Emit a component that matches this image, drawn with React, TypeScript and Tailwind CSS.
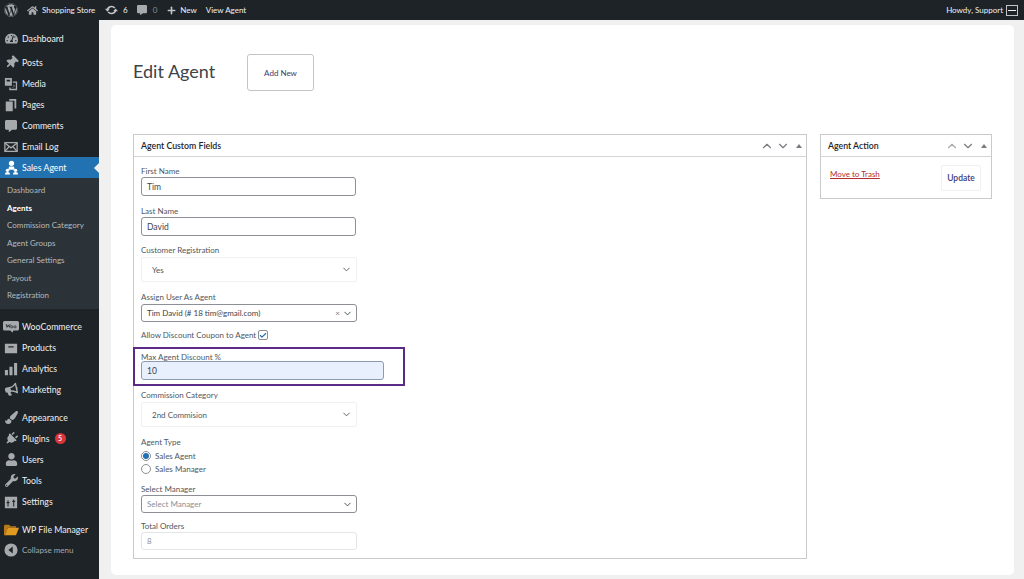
import type { ReactNode } from "react";
import { Check, ChevronDown, ChevronUp, Plus } from "lucide-react";
import {
  FaBullhorn,
  FaCommentAlt,
  FaHome,
  FaPaintBrush,
  FaPlug,
  FaThumbtack,
  FaTachometerAlt,
  FaUser,
  FaWordpress,
  FaWrench,
} from "react-icons/fa";

function UpdatesIcon() {
  return (
    <svg viewBox="0 0 16 12" className="h-[10px] w-[13px]" fill="none" stroke="currentColor" strokeWidth="2">
      <path d="M3 6a5 4.500 0 0 1 9-2.500M13 6a5 4.500 0 0 1-9 2.500" />
      <path d="M0 4.500h6L3 8zM16 7.500h-6L13 4z" fill="currentColor" stroke="none" />
    </svg>
  );
}

function MediaIcon() {
  return (
    <svg viewBox="0 0 16 16" className="h-[14px] w-[14px]" fill="currentColor">
      <path d="M1 1h8v9H1zM3 3v2h4V3zM10 5h5v10H6v-3h1.500v1.500H13.500V6.500H10zM10.500 8.500a1.500 1.500 0 1 1-1 2.600V12H11V8.500z" fillRule="evenodd" />
    </svg>
  );
}

function PagesIcon() {
  return (
    <svg viewBox="0 0 16 16" className="h-[14px] w-[14px]" fill="currentColor">
      <path d="M6 1h8v11h-2V3H6zM2 4h8v11H2z" />
    </svg>
  );
}

function MailIcon() {
  return (
    <svg viewBox="0 0 16 16" className="h-[14px] w-[14px]" fill="none" stroke="currentColor" strokeWidth="1.500">
      <rect x="1" y="3" width="14" height="10" />
      <path d="M1 3.500 8 9l7-5.500M1 13l5-5.500M15 13l-5-5.500" />
    </svg>
  );
}

function AgentIcon() {
  return (
    <svg viewBox="0 0 16 16" className="h-[15px] w-[15px]" fill="currentColor">
      <circle cx="8" cy="3.500" r="2.800" />
      <path d="M5.500 7h5l1 3.500h-7z" />
      <circle cx="3.700" cy="11" r="1.800" />
      <circle cx="12.300" cy="11" r="1.800" />
      <path d="M1 15.500c0-2 1-2.800 2.700-2.800s2.700.8 2.700 2.800zM9.600 15.500c0-2 1-2.800 2.700-2.800s2.700.8 2.700 2.800z" />
    </svg>
  );
}

function WooIcon() {
  return (
    <svg viewBox="0 0 20 16" className="h-[13px] w-[16px]" fill="currentColor">
      <path d="M2 1h16a2 2 0 0 1 2 2v8a2 2 0 0 1-2 2h-5l-1 2.500-3-2.500H2a2 2 0 0 1-2-2V3a2 2 0 0 1 2-2z" />
      <path d="M4 5l1 4 1.500-3L8 9l1-4M11 7a1.200 1.500 0 1 0 .01 0M15 7a1.200 1.500 0 1 0 .01 0" fill="none" stroke="#1d2327" strokeWidth="1" />
    </svg>
  );
}

function ProductsIcon() {
  return (
    <svg viewBox="0 0 16 16" className="h-[14px] w-[14px]" fill="currentColor">
      <path d="M1 3h14v11H1zM5 6v1.500h6V6z" fillRule="evenodd" />
    </svg>
  );
}

function AnalyticsIcon() {
  return (
    <svg viewBox="0 0 16 16" className="h-[14px] w-[14px]" fill="currentColor">
      <path d="M1 9h3.500v6H1zM6.200 5.500h3.500V15H6.200zM11.500 1H15v14h-3.500z" />
    </svg>
  );
}

function SettingsIcon() {
  return (
    <svg viewBox="0 0 16 16" className="h-[14px] w-[14px]" fill="currentColor">
      <path d="M1 2h14v13H1zM4 6v2H3v1.500h1V13h1.200V9.500h1V8h-1V6zM10.500 5v1.500h-1V8h1v5h1.200V8h1V6.500h-1V5z" fillRule="evenodd" />
    </svg>
  );
}

function FolderIcon() {
  return (
    <svg viewBox="0 0 20 16" className="h-[12px] w-[15px]">
      <path d="M0 2.500 1 1h6l1.500 2H16v2H5L2 15H0z" fill="#b8791a" />
      <path d="M5 5h15l-4 10H1.500z" fill="#e09a22" />
    </svg>
  );
}

function CollapseIcon() {
  return (
    <svg viewBox="0 0 16 16" className="h-[14px] w-[14px]">
      <circle cx="8" cy="8" r="7.500" fill="currentColor" />
      <path d="M10 4v8L5 8z" fill="#1d2327" />
    </svg>
  );
}

function MenuItem({ icon, label, badge, className = "" }: { icon: ReactNode; label: string; badge?: string; className?: string }) {
  return (
    <div className={`flex h-[21px] items-center text-[#f0f0f1] ${className}`}>
      <span className="flex w-[22px] shrink-0 justify-center text-[#a7aaad]">{icon}</span>
      <span className="text-[8.750px] whitespace-nowrap">{label}</span>
      {badge && (
        <span className="ml-[5px] flex h-[11px] w-[11px] items-center justify-center rounded-full bg-[#d63638] text-[7px] font-semibold text-white">
          {badge}
        </span>
      )}
    </div>
  );
}

function Sidebar() {
  const icon = "h-[13px] w-[13px]";
  return (
    <aside className="flex w-[99px] shrink-0 flex-col bg-[#1d2327] pt-[8px]">
      <MenuItem icon={<FaTachometerAlt className={icon} />} label="Dashboard" />
      <div className="mt-[3px] flex flex-col">
        <MenuItem icon={<FaThumbtack className={`${icon} rotate-45`} />} label="Posts" />
        <MenuItem icon={<MediaIcon />} label="Media" />
        <MenuItem icon={<PagesIcon />} label="Pages" />
        <MenuItem icon={<FaCommentAlt className="h-[12px] w-[12px]" />} label="Comments" />
        <MenuItem icon={<MailIcon />} label="Email Log" />
      </div>
      <div className="flex h-[21px] items-center bg-[#2271b1] text-white">
        <span className="flex w-[22px] shrink-0 justify-center">
          <AgentIcon />
        </span>
        <span className="grow text-[8.750px]">Sales Agent</span>
        <span className="h-0 w-0 border-y-[5px] border-r-[5px] border-y-transparent border-r-[#f0f0f1]" />
      </div>
      <div className="flex h-[131px] flex-col bg-[#2c3338] pt-[3.500px] pl-[7px] text-[8px] text-[#b4b9be]">
        <span className="flex h-[17.500px] items-center">Dashboard</span>
        <span className="flex h-[17.500px] items-center font-bold text-white">Agents</span>
        <span className="flex h-[17.500px] items-center whitespace-nowrap">Commission Category</span>
        <span className="flex h-[17.500px] items-center">Agent Groups</span>
        <span className="flex h-[17.500px] items-center">General Settings</span>
        <span className="flex h-[17.500px] items-center">Payout</span>
        <span className="flex h-[17.500px] items-center">Registration</span>
      </div>
      <div className="mt-[7px] flex flex-col">
        <MenuItem icon={<WooIcon />} label="WooCommerce" />
        <MenuItem icon={<ProductsIcon />} label="Products" />
        <MenuItem icon={<AnalyticsIcon />} label="Analytics" />
        <MenuItem icon={<FaBullhorn className={`${icon} -rotate-12`} />} label="Marketing" />
      </div>
      <div className="mt-[7px] flex flex-col">
        <MenuItem icon={<FaPaintBrush className={icon} />} label="Appearance" />
        <MenuItem icon={<FaPlug className={`${icon} rotate-45`} />} label="Plugins" badge="5" />
        <MenuItem icon={<FaUser className={icon} />} label="Users" />
        <MenuItem icon={<FaWrench className={icon} />} label="Tools" />
        <MenuItem icon={<SettingsIcon />} label="Settings" />
      </div>
      <MenuItem className="mt-[7px]" icon={<FolderIcon />} label="WP File Manager" />
      <div className="flex h-[20px] items-center text-[#a7aaad]">
        <span className="flex w-[22px] shrink-0 justify-center">
          <CollapseIcon />
        </span>
        <span className="text-[8px]">Collapse menu</span>
      </div>
    </aside>
  );
}

function TopBar() {
  return (
    <header className="flex h-[20px] shrink-0 items-center justify-between bg-[#1d2327] pl-[4px] text-[8px] text-[#f0f0f1]">
      <div className="flex items-center">
        <FaWordpress className="h-[14px] w-[14px] text-[#a7aaad]" />
        <FaHome className="ml-[9px] h-[11px] w-[11px] text-[#a7aaad]" />
        <span className="ml-[4px] w-[55px] whitespace-nowrap">Shopping Store</span>
        <span className="ml-[8px] text-[#c3c4c7]">
          <UpdatesIcon />
        </span>
        <span className="ml-[5px]">6</span>
        <FaCommentAlt className="ml-[9px] h-[10px] w-[10px] text-[#a7aaad]" />
        <span className="ml-[6px] text-[#8c8f94]">0</span>
        <Plus className="ml-[9px] h-[11px] w-[11px] text-[#c3c4c7]" strokeWidth={3.500} />
        <span className="ml-[3px]">New</span>
        <span className="ml-[9px]">View Agent</span>
      </div>
      <div className="flex items-center pr-[6px]">
        <span>Howdy, Support</span>
        <span className="ml-[3px] flex h-[11px] w-[12px] items-center justify-center border border-[#c3c4c7]">
          <span className="h-px w-[8px] bg-[#f0f0f1]" />
        </span>
      </div>
    </header>
  );
}

function Label({ children }: { children: ReactNode }) {
  return <div className="text-[8px] leading-[12px] text-[#50575e]">{children}</div>;
}

function TextField({ value, className = "" }: { value: string; className?: string }) {
  return (
    <div className={`flex h-[19px] w-[215px] items-center rounded-[3px] border border-[#8c8f94] pt-[1px] pl-[5px] text-[8.500px] text-[#3c434a] ${className}`}>
      {value}
    </div>
  );
}

function PlainSelect({ value }: { value: string }) {
  return (
    <div className="flex h-[25px] w-[216px] items-center justify-between rounded-[2px] border border-[#f0f0f1] pr-[4px] pl-[10px] text-[8px] text-[#50575e]">
      {value}
      <ChevronDown className="h-[11px] w-[11px] text-[#50575e]" strokeWidth={2} />
    </div>
  );
}

function PanelHeader({ title, faded = false }: { title: string; faded?: boolean }) {
  return (
    <div className="flex h-[22px] shrink-0 items-center justify-between border-b border-[#d5d5d7] pr-[3px] pl-[7px]">
      <span className="text-[8.750px] font-semibold text-[#1d2327]">{title}</span>
      <div className={`flex items-center gap-[1.500px] ${faded ? "text-[#a7aaad]" : "text-[#787c82]"}`}>
        <ChevronUp className="h-[14px] w-[14px]" strokeWidth={2} />
        <ChevronDown className="h-[14px] w-[14px] text-[#787c82]" strokeWidth={2} />
        <span className="mr-[1px] ml-[5px] h-0 w-0 border-x-[3px] border-b-[4px] border-x-transparent border-b-[#787c82]" />
      </div>
    </div>
  );
}

function Radio({ label, checked = false }: { label: string; checked?: boolean }) {
  return (
    <div className="flex h-[13px] items-center gap-[4px]">
      <span className="flex h-[10px] w-[10px] items-center justify-center rounded-full border border-[#8c8f94]">
        {checked && <span className="h-[6px] w-[6px] rounded-full bg-[#2271b1]" />}
      </span>
      <span className="text-[8px] text-[#50575e]">{label}</span>
    </div>
  );
}

function AgentFields() {
  return (
    <section className="flex h-[425px] w-[674px] flex-col border border-[#c9cacc]">
      <PanelHeader title="Agent Custom Fields" />
      <div className="flex flex-col pt-[8px] pl-[7px]">
        <Label>First Name</Label>
        <TextField value="Tim" />
        <div className="mt-[9px]">
          <Label>Last Name</Label>
        </div>
        <TextField value="David" />
        <div className="mt-[8px]">
          <Label>Customer Registration</Label>
        </div>
        <div className="mt-[1px]">
          <PlainSelect value="Yes" />
        </div>
        <div className="mt-[9px]">
          <Label>Assign User As Agent</Label>
        </div>
        <div className="mt-[1px] flex h-[18px] w-[216px] items-center justify-between rounded-[3px] border border-[#8c8f94] pr-[3px] pl-[5px] text-[8px] text-[#3c434a]">
          Tim David (# 18 tim@gmail.com)
          <span className="flex items-center gap-[2px] text-[#787c82]">
            <span className="text-[8px] leading-none">×</span>
            <ChevronDown className="h-[11px] w-[11px] text-[#3c434a]" strokeWidth={2} />
          </span>
        </div>
        <div className="mt-[7px] flex h-[12px] items-center gap-[2px] text-[8px] text-[#50575e]">
          Allow Discount Coupon to Agent
          <span className="flex h-[10px] w-[10px] items-center justify-center rounded-[2px] border border-[#8c8f94]">
            <Check className="h-[9px] w-[9px] text-[#2271b1]" strokeWidth={3.500} />
          </span>
        </div>
        <div className="mt-[6px] -ml-[8px] flex h-[39px] w-[272px] flex-col border-2 border-[#5b2a86] pt-[2px] pl-[6px]">
          <Label>Max Agent Discount %</Label>
          <TextField value="10" className="-mt-[2px] w-[243px] border-[#8c9bb0] bg-[#e8f0fe]" />
        </div>
        <div className="mt-[3px]">
          <Label>Commission Category</Label>
        </div>
        <div className="mt-[1px]">
          <PlainSelect value="2nd Commision" />
        </div>
        <div className="mt-[9px]">
          <Label>Agent Type</Label>
        </div>
        <div className="mt-[1px]">
          <Radio label="Sales Agent" checked />
          <Radio label="Sales Manager" />
        </div>
        <div className="mt-[8px]">
          <Label>Select Manager</Label>
        </div>
        <div className="flex h-[18px] w-[216px] items-center justify-between rounded-[3px] border border-[#8c8f94] pr-[3px] pl-[5px] text-[8px] text-[#8c8f94]">
          Select Manager
          <ChevronDown className="h-[11px] w-[11px] text-[#3c434a]" strokeWidth={2} />
        </div>
        <div className="mt-[7px]">
          <Label>Total Orders</Label>
        </div>
        <div className="flex h-[18px] w-[216px] items-center rounded-[3px] border border-[#e4e5e7] pl-[5px] text-[8px] text-[#8c8f94]">
          8
        </div>
      </div>
    </section>
  );
}

function AgentAction() {
  return (
    <section className="flex h-[65px] w-[172px] flex-col border border-[#c9cacc]">
      <PanelHeader title="Agent Action" faded />
      <div className="flex justify-between pt-[8px] pr-[10px] pl-[9px]">
        <a className="pt-[3px] text-[8px] leading-[12px] text-[#b32d2e] underline">Move to Trash</a>
        <button className="flex h-[26px] w-[40px] items-center justify-center rounded-[2px] border border-[#f0f0f1] text-[8.500px] font-semibold text-[#3b3b7a]">
          Update
        </button>
      </div>
    </section>
  );
}

export default function App() {
  return (
    <div className="flex h-[579px] w-[1024px] flex-col overflow-hidden bg-[#f0f0f1] font-['Lato','Noto_Sans',sans-serif]">
      <TopBar />
      <div className="flex min-h-0 grow">
        <Sidebar />
        <main className="min-w-0 grow pt-[5px] pr-[10px] pl-[12px]">
          <div className="h-[550px] rounded-[5px] bg-white pt-[29px] pl-[22px]">
            <div className="flex h-[37px] items-center">
              <h1 className="-mt-[3px] w-[114px] text-[18px] leading-none font-normal text-[#3c434a]">Edit Agent</h1>
              <button className="h-[37px] w-[67px] rounded-[3px] border border-[#c3c4c7] text-[8px] text-[#3b3b6b]">Add New</button>
            </div>
            <div className="mt-[43px] flex items-start gap-[13px]">
              <AgentFields />
              <AgentAction />
            </div>
          </div>
        </main>
      </div>
    </div>
  );
}
